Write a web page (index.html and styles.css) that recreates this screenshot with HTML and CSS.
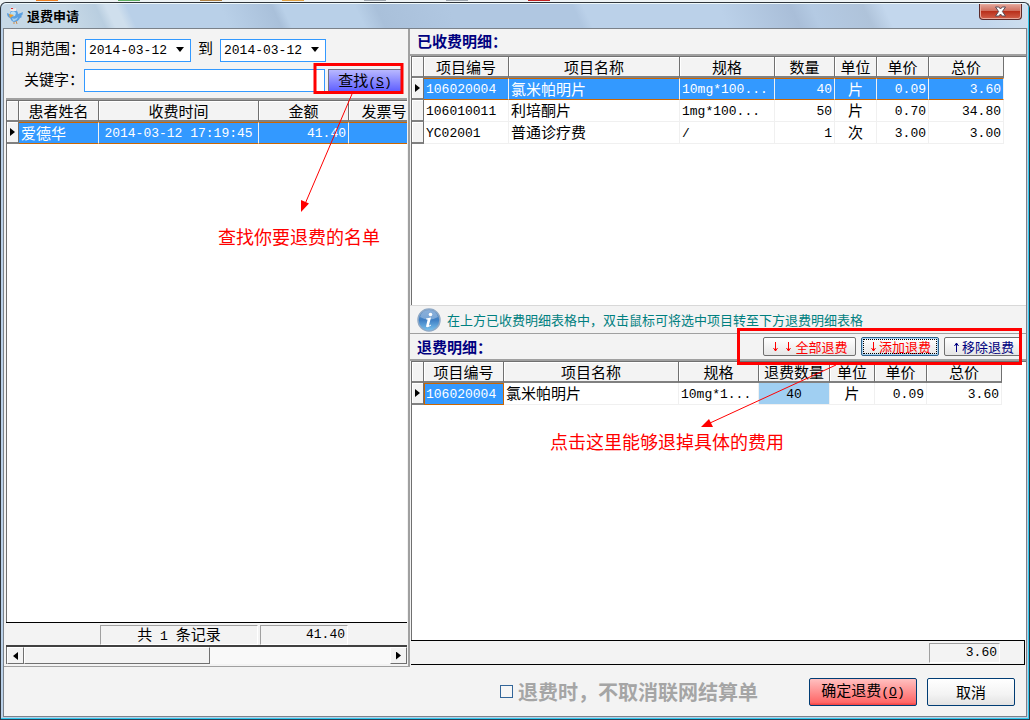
FILE: index.html
```html
<!DOCTYPE html>
<html lang="zh-CN">
<head>
<meta charset="utf-8">
<title>退费申请</title>
<link rel="stylesheet" href="styles.css">
</head>
<body>
<div class="backdrop">
  <i class="chip orange"></i><i class="chip green"></i><i class="chip brown"></i><i class="chip gold"></i><i class="chip gray"></i><i class="chip gray"></i><i class="chip red"></i>
</div>
<div class="window">
  <header class="titlebar">
    <svg class="app-icon" width="18" height="18" viewBox="0 0 18 18" aria-hidden="true">
      <path d="M1 6Q3 7 4 7Q4 3 8 3Q12 3 12 7Q15 6 17 5Q17 8 15 9Q17 10 14 11Q12 15 8 15Q5 14 4 11Q1 10 1 6Z" fill="#5b9fe0"/>
      <path d="M5 5Q8 3 10 6L9 9Q5 10 4 8Z" fill="#b5def8"/>
      <path d="M3 7l5 1-4 3z" fill="#f0a030"/>
      <path d="M4 3l2-3 1 2 3-1v3H5z" fill="#f6e6e6"/>
      <path d="M5 1h2v1H5z" fill="#d33"/>
      <path d="M6 11q3 2 6-1-1 4-5 4z" fill="#a6d2f3"/>
      <path d="M8 15v2M10 14l1 3" stroke="#c98d52"/>
    </svg>
    <h1 class="title">退费申请</h1>
    <button class="close" aria-label="关闭">
      <svg width="13" height="11" viewBox="0 0 13 11" aria-hidden="true"><path d="M1.500 1h3.300l1.700 2 1.700-2h3.300L8.400 5.500l3.100 4.500H8.200L6.500 8l-1.700 2H1.500l3.100-4.500z" fill="#fff" stroke="#5a4a55"/></svg>
    </button>
  </header>
  <main class="content">
    <section class="left">
      <form class="filters">
        <div class="field-row">
          <label for="from">日期范围：</label>
          <span class="picker"><select id="from" class="mono"><option>2014-03-12</option></select></span>
          <label for="to" class="to">到</label>
          <span class="picker"><select id="to" class="mono"><option>2014-03-12</option></select></span>
        </div>
        <div class="field-row">
          <label for="keyword">关键字：</label>
          <input id="keyword" class="keyword" type="text">
          <button type="button" class="search">查找<span class="mono">(<u>S</u>)</span></button>
        </div>
      </form>
      <div class="grid-box">
        <table class="grid patients">
          <colgroup><col class="w12"><col class="w80"><col class="w160"><col class="w90"><col class="w71"></colgroup>
          <thead><tr><th></th><th>患者姓名</th><th>收费时间</th><th>金额</th><th>发票号</th></tr></thead>
          <tbody><tr class="selected"><th><i class="mark"></i></th><td>爱德华</td><td class="mono center">2014-03-12 17:19:45</td><td class="mono num">41.40</td><td></td></tr></tbody>
        </table>
      </div>
      <div class="summary left-summary">
        <span class="cell count">共<span class="mono"> 1 </span>条记录</span>
        <span class="cell mono amount">41.40</span>
      </div>
      <div class="scrollbar">
        <button class="scroll-btn" aria-label="向左"><i class="mark back"></i></button>
        <span class="thumb"></span>
        <button class="scroll-btn end" aria-label="向右"><i class="mark"></i></button>
      </div>
    </section>
    <section class="right">
      <div class="upper">
        <h2 class="caption">已收费明细：</h2>
        <div class="grid-box">
          <table class="grid charged">
            <colgroup><col class="w12"><col class="w85"><col class="w171"><col class="w95"><col class="w60"><col class="w42"><col class="w52"><col class="w75"></colgroup>
            <thead><tr><th></th><th>项目编号</th><th>项目名称</th><th>规格</th><th>数量</th><th>单位</th><th>单价</th><th>总价</th></tr></thead>
            <tbody>
              <tr class="selected"><th><i class="mark"></i></th><td class="mono">106020004</td><td>氯米帕明片</td><td class="mono">10mg*100...</td><td class="mono num">40</td><td class="center">片</td><td class="mono num">0.09</td><td class="mono num">3.60</td></tr>
              <tr><th></th><td class="mono">106010011</td><td>利培酮片</td><td class="mono">1mg*100...</td><td class="mono num">50</td><td class="center">片</td><td class="mono num">0.70</td><td class="mono num">34.80</td></tr>
              <tr><th></th><td class="mono">YC02001</td><td>普通诊疗费</td><td class="mono">/</td><td class="mono num">1</td><td class="center">次</td><td class="mono num">3.00</td><td class="mono num">3.00</td></tr>
            </tbody>
          </table>
        </div>
      </div>
      <div class="lower">
        <div class="hint">
          <svg width="24" height="24" viewBox="0 0 24 24" aria-hidden="true">
            <defs><linearGradient id="ball" x1="0" y1="0" x2="0" y2="1"><stop offset="0" stop-color="#5c8fca"/><stop offset=".5" stop-color="#3f7fc4"/><stop offset="1" stop-color="#7cc4ee"/></linearGradient></defs>
            <circle cx="12" cy="12" r="11" fill="url(#ball)" stroke="#8fa9c6" stroke-width="1.500"/>
            <path d="M3 9Q5 2 12 2Q19 2 21 9Q12 14 3 9Z" fill="#fff" opacity=".3"/>
            <circle cx="13.500" cy="6.500" r="1.800" fill="#fff"/>
            <path d="M9 10.500l5-1-2 7.500q0 1 2-.5v1q-4 3-5 1l1.500-6.500q0-1-1.500-.5z" fill="#fff"/>
          </svg>
          <p>在上方已收费明细表格中，双击鼠标可将选中项目转至下方退费明细表格</p>
        </div>
        <div class="caption tools">
          <h2>退费明细：</h2>
          <button class="tool red-text wide"><svg width="24" height="12" viewBox="0 0 24 12" aria-hidden="true"><path d="M4.500 1v9M2.500 7l2 3 2-3M17.500 1v9M15.500 7l2 3 2-3" fill="none" stroke="currentColor"/></svg>全部退费</button>
          <button class="tool red-text focused"><svg width="10" height="12" viewBox="0 0 10 12" aria-hidden="true"><path d="M4.500 1v9M2.500 7l2 3 2-3" fill="none" stroke="currentColor"/></svg>添加退费</button>
          <button class="tool navy-text"><svg width="10" height="12" viewBox="0 0 10 12" aria-hidden="true"><path d="M4.500 11V2M2.500 5l2-3 2 3" fill="none" stroke="currentColor"/></svg>移除退费</button>
        </div>
        <div class="grid-box">
          <table class="grid refunds">
            <colgroup><col class="w12"><col class="w80"><col class="w175"><col class="w80"><col class="w71"><col class="w45"><col class="w52"><col class="w75"></colgroup>
            <thead><tr><th></th><th>项目编号</th><th>项目名称</th><th>规格</th><th>退费数量</th><th>单位</th><th>单价</th><th>总价</th></tr></thead>
            <tbody><tr><th><i class="mark"></i></th><td class="mono active">106020004</td><td>氯米帕明片</td><td class="mono">10mg*1...</td><td class="mono center editable">40</td><td class="center">片</td><td class="mono num">0.09</td><td class="mono num">3.60</td></tr></tbody>
          </table>
        </div>
        <div class="summary right-summary"><span class="cell mono total">3.60</span></div>
      </div>
    </section>
  </main>
  <footer class="actions">
    <label class="option"><input type="checkbox" disabled>退费时，不取消联网结算单</label>
    <button class="action confirm">确定退费<span class="mono">(<u>O</u>)</span></button>
    <button class="action">取消</button>
  </footer>
</div>
<div class="notes">
  <svg width="1030" height="720" viewBox="0 0 1030 720" aria-hidden="true">
    <g fill="none" stroke="#f00">
      <rect x="315" y="64.500" width="87" height="28" stroke-width="3"/>
      <rect x="738.500" y="329.500" width="282" height="34" stroke-width="3"/>
      <path d="M352 94L305 204M836 365L710 423"/>
    </g>
    <path d="M301 212V200L309 203.500ZM701 427L709 419L713 427Z" fill="#f00"/>
  </svg>
  <p class="note note-search">查找你要退费的名单</p>
  <p class="note note-refund">点击这里能够退掉具体的费用</p>
</div>
</body>
</html>
```
FILE: styles.css
```css
* { box-sizing: border-box; }
body {
  margin: 0;
  position: relative;
  min-height: 100vh;
  display: flex;
  flex-direction: column;
  background: #eef3f5;
  color: #000;
  font: 15px/20px "Noto Sans CJK SC", sans-serif;
}
button, input, select { font: inherit; color: inherit; margin: 0; padding: 0; border-radius: 0; }
h1, h2, p { margin: 0; }
.mono { font-family: "Liberation Mono", "Noto Sans CJK SC", monospace; font-size: 13px; white-space: pre; }

.backdrop { height: 2px; display: flex; gap: 60px; padding-left: 36px; }
.chip { width: 22px; height: 1px; }
.orange { background: #f08020; }
.green { background: #5cae60; }
.brown { background: #b08040; }
.gold { background: #e0a040; }
.gray { background: #a0a8b0; }
.red { background: #c02020; }

.window {
  flex: 1;
  display: flex;
  flex-direction: column;
  border: 1px solid #30363c;
  border-bottom-color: #2c3f55;
  border-radius: 6px 6px 0 0;
  background: #b9d0e8;
  padding: 0 2px 2px;
  box-shadow: inset -1px -1px #2fc9ee;
}
.titlebar {
  height: 25px;
  flex: none;
  display: flex;
  align-items: center;
  padding-left: 4px;
  margin: 0 -1px;
  border-radius: 5px 5px 0 0;
  border-top: 1px solid #eef8fa;
  background: linear-gradient(65deg, #c6d8e6 0 7%, #b9cee0 10%, #cfdfed 11% 12%, #b9d0e8 13% 22%, #a9c0da 27%, #b9d0e8 28% 35%, #a9c0da 37%, #b0c7e1 44% 56%, #bbd1e9 57% 70%, #a9bed8 77%, #b4cae3 79%, #afc3da 84%, #c3d7ed 86% 95%, #cfe0ef);
}
.app-icon { flex: none; }
.title { font-size: 13px; line-height: 20px; font-weight: 700; margin-left: 3px; }
.close {
  width: 43px;
  height: 16px;
  margin-left: auto;
  margin-right: 6px;
  align-self: flex-start;
  display: flex;
  align-items: center;
  justify-content: center;
  border: 1px solid #5b2a2a;
  border-top: 0;
  border-radius: 0 0 4px 4px;
  background: linear-gradient(#e3a79b, #d0705f 45%, #b9301c 50%, #d2604a);
  box-shadow: inset 0 0 0 1px #e8a99c;
}

.content {
  flex: 1;
  display: flex;
  background: #f3f3f3;
  border: 1px solid #7b828a;
  border-bottom: 0;
}
.left {
  flex: 0 0 406px;
  min-width: 0;
  display: flex;
  flex-direction: column;
  padding: 2px 1px 2px 2px;
  border-right: 2px solid #a0a0a0;
  border-bottom: 1px solid #a0a0a0;
}
.filters {
  height: 69px;
  flex: none;
  display: flex;
  flex-direction: column;
  gap: 7px;
  padding: 6px 4px 0;
  border-bottom: 2px solid #a0a0a0;
}
.field-row { display: flex; align-items: center; height: 24px; }
.field-row label { flex: 0 0 74px; line-height: 22px; padding-bottom: 2px; text-align: right; white-space: nowrap; }
.field-row .to { flex: 0 0 29px; text-align: center; }
.picker { position: relative; width: 106px; height: 23px; }
.picker select {
  width: 100%;
  height: 100%;
  appearance: none;
  border: 1px solid #3399ff;
  background: #fff;
  padding-left: 3px;
}
.picker::after {
  content: "";
  position: absolute;
  right: 7px;
  top: 9px;
  border: 4px solid transparent;
  border-top: 5px solid #000;
  border-bottom: 0;
  pointer-events: none;
}
.keyword { width: 241px; height: 23px; border: 1px solid #3399ff; background: #fff; }
.search {
  width: 74px;
  height: 23px;
  margin-left: 3px;
  border: 1px solid #707080;
  background: linear-gradient(#b8b8ff, #6060ff);
  line-height: 20px;
}

.grid-box {
  flex: 1;
  overflow: hidden;
  background: #fff;
  border-left: 1px solid #707070;
  border-top: 1px solid #707070;
}
.grid { table-layout: fixed; border-collapse: separate; border-spacing: 0; }
.patients { width: 413px; }
.charged { width: 592px; }
.refunds { width: 590px; }
.w12 { width: 12px; }
.w42 { width: 42px; }
.w45 { width: 45px; }
.w52 { width: 52px; }
.w60 { width: 60px; }
.w71 { width: 71px; }
.w75 { width: 75px; }
.w80 { width: 80px; }
.w85 { width: 85px; }
.w90 { width: 90px; }
.w95 { width: 95px; }
.w160 { width: 160px; }
.w171 { width: 171px; }
.w175 { width: 175px; }
.grid th, .grid td { height: 22px; padding: 0; line-height: 18px; white-space: nowrap; }
.grid th {
  font-weight: 400;
  background: #f3f3f3;
  border-right: 1px solid #707070;
  border-bottom: 2px solid #808080;
  box-shadow: inset 1px 1px #fff;
}
.grid thead th { height: 21px; }
.grid td { padding: 0 2px 1px; border-right: 1px solid #f0f0f0; border-bottom: 1px solid #f0f0f0; }
.grid td.mono { padding-top: 2px; padding-bottom: 0; }
.grid td.num { text-align: right; }
.center { text-align: center; }
.grid .selected td {
  background: #3399ff;
  color: #fff;
  border-top: 1px solid #cc6600;
  border-bottom: 1px solid #cc6600;
}
.grid .selected td.mono { padding-top: 1px; }
.grid td.active { background: #3399ff; color: #fff; border: 1px solid #cc6600; padding-left: 1px; }
.grid td.mono.active { padding-top: 1px; }
.grid td.editable { background: #a0cff2; }
.mark {
  display: block;
  width: 5px;
  height: 8px;
  margin: 0 auto;
  background: #000;
  clip-path: polygon(0 0, 100% 50%, 0 100%);
}
.back { transform: rotate(180deg); }

.summary { display: flex; height: 25px; flex: none; border-top: 1px solid #000; padding-top: 2px; }
.cell { height: 20px; line-height: 18px; border: 1px solid #a0a0a0; border-right-color: #fff; border-bottom-color: #fff; }
.left-summary { border-bottom: 2px solid #404040; padding-left: 94px; gap: 2px; }
.count { width: 158px; line-height: 16px; text-align: center; }
.amount { width: 88px; text-align: right; padding-right: 2px; }
.scrollbar { display: flex; height: 17px; flex: none; background: #f9f9f9; border-left: 1px solid #707070; }
.scroll-btn, .thumb {
  background: #f3f3f3;
  border: 1px solid #fff;
  border-right-color: #707070;
  border-bottom-color: #707070;
}
.scroll-btn { width: 17px; }
.thumb { width: 186px; }
.end { margin-left: auto; }

.right {
  flex: 1;
  min-width: 0;
  display: grid;
  grid-template-rows: 23fr 30fr;
  padding-bottom: 2px;
}
.upper, .lower { display: flex; flex-direction: column; min-height: 0; }
.caption, .caption h2 { font-size: 15px; line-height: 24px; font-weight: 700; color: #000080; }
.caption { height: 27px; flex: none; padding-left: 7px; border-bottom: 2px solid #a0a0a0; }
.upper .grid-box, .lower .grid-box { margin-left: 1px; }
.hint {
  height: 29px;
  flex: none;
  display: flex;
  align-items: center;
  gap: 6px;
  padding: 1px 0 0 7px;
  border-top: 1px solid #d8d8d8;
  border-bottom: 1px solid #a0a0a0;
  color: #008080;
  font-size: 13px;
  white-space: nowrap;
}
.tools { display: flex; align-items: center; gap: 5px; padding-right: 4px; }
.tools h2 { margin-right: auto; }
.tool {
  width: 78px;
  height: 19px;
  display: flex;
  align-items: center;
  justify-content: center;
  border: 1px solid #707070;
  border-radius: 2px;
  background: linear-gradient(#fff, #e6e6e6);
  font-size: 13px;
  line-height: 16px;
  font-weight: 400;
  white-space: nowrap;
}
.wide { width: 93px; }
.red-text { color: #f00; }
.navy-text { color: #000080; }
.focused { border-color: #2c628b; box-shadow: inset 0 0 0 1px #a9d3f5; outline: 1px dotted #000; outline-offset: -3px; }
.right-summary {
  justify-content: flex-end;
  margin: 0 1px 0 1px;
  padding-right: 24px;
  border-right: 1px solid #000;
  border-bottom: 1px solid #000;
}
.total { width: 71px; text-align: right; padding-right: 2px; }

.actions {
  height: 50px;
  flex: none;
  display: flex;
  align-items: center;
  justify-content: flex-end;
  gap: 10px;
  padding-right: 11px;
  background: #f3f3f3;
  border: 1px solid #7b828a;
  border-top: 0;
}
.option { display: flex; align-items: center; gap: 5px; margin-right: 41px; color: #a5a5a5; font-size: 20px; font-weight: 700; white-space: nowrap; }
.option input { appearance: none; width: 13px; height: 13px; border: 1px solid #336699; background: #f6f6f6; }
.action {
  width: 88px;
  height: 28px;
  border: 1px solid #003c74;
  border-radius: 2px;
  background: linear-gradient(#fff, #f3f3f3 60%, #e2e2e2);
}
.confirm { width: 108px; background: linear-gradient(#ffc0c0, #ff6868 90%, #f04040); }

.notes { position: absolute; left: 0; top: 0; pointer-events: none; }
.notes svg { display: block; }
.note { position: absolute; color: #f00; font-size: 18px; line-height: 24px; white-space: nowrap; }
.note-search { left: 218px; top: 224px; }
.note-refund { left: 550px; top: 429px; }
```
